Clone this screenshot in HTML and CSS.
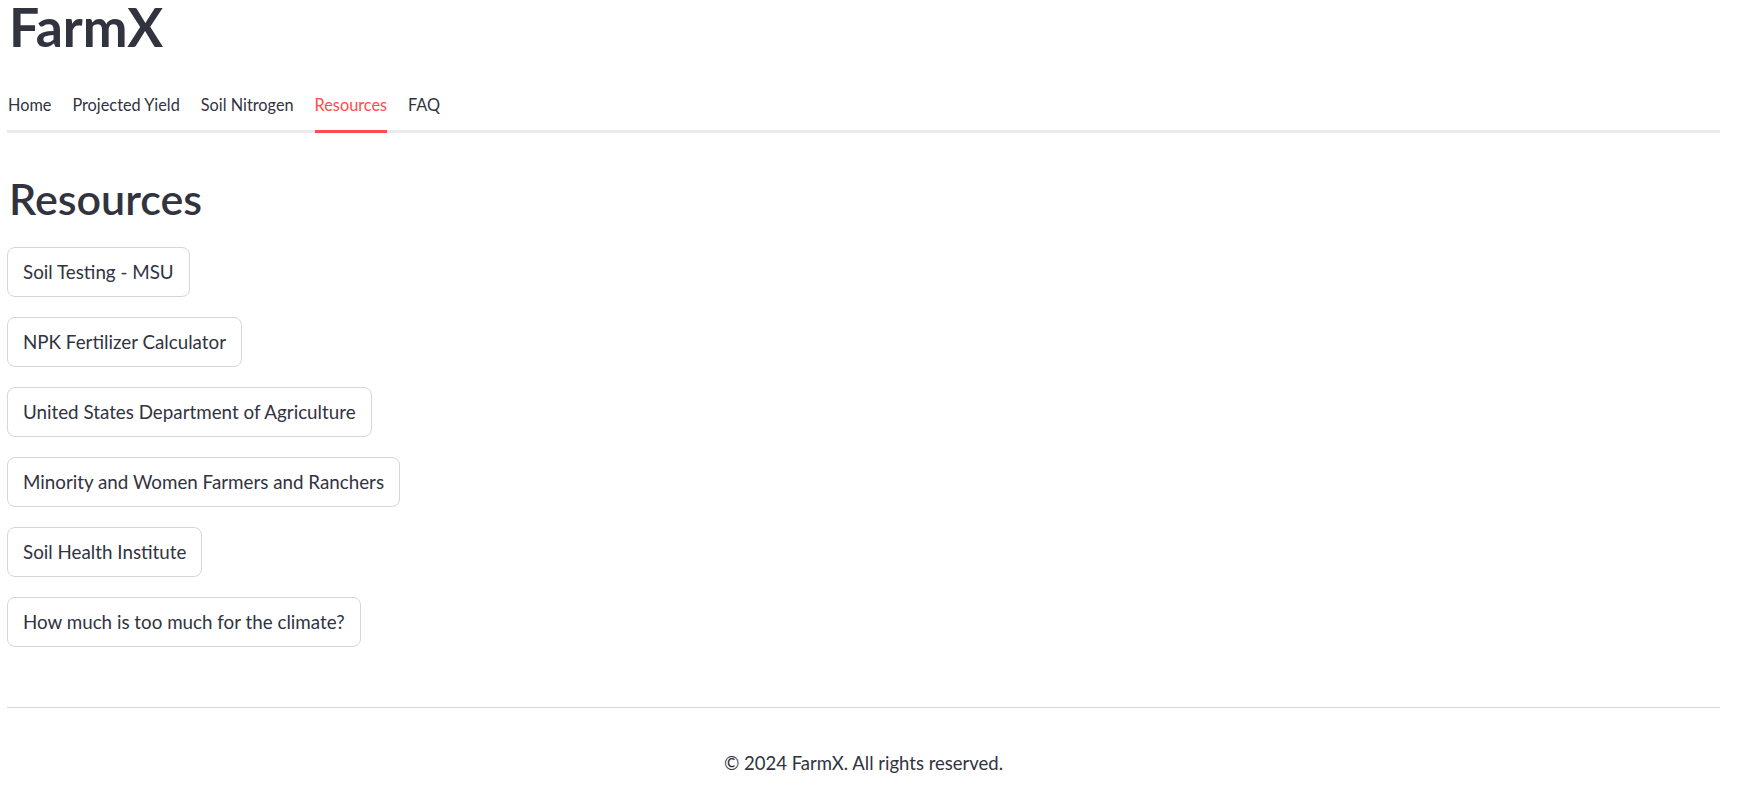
FILE: index.html
```html
<!DOCTYPE html>
<html lang="en">
<head>
    <meta charset="UTF-8">
    <meta name="viewport" content="width=device-width, initial-scale=1.0">
    <title>FarmX - Resources</title>
    <link rel="stylesheet" href="styles.css">
</head>
<body>

<div class="page">
    <h1 class="brand">FarmX</h1>

    <!-- Tabs -->
    <nav class="tabs">
        <a class="tab" href="#">Home</a>
        <a class="tab" href="#">Projected Yield</a>
        <a class="tab" href="#">Soil Nitrogen</a>
        <a class="tab active" href="#">Resources</a>
        <a class="tab" href="#">FAQ</a>
    </nav>

    <h2 class="section-title">Resources</h2>

    <div class="links">
        <button class="link-btn">Soil Testing - MSU</button>
        <button class="link-btn">NPK Fertilizer Calculator</button>
        <button class="link-btn">United States Department of Agriculture</button>
        <button class="link-btn">Minority and Women Farmers and Ranchers</button>
        <button class="link-btn">Soil Health Institute</button>
        <button class="link-btn">How much is too much for the climate?</button>
    </div>

    <footer class="footer">
        <p>&copy; 2024 FarmX. All rights reserved.</p>
    </footer>
</div>

</body>
</html>
```

FILE: styles.css
```css
* {
    margin: 0;
    padding: 0;
    box-sizing: border-box;
}

body {
    font-family: 'Lato', 'Noto Sans', sans-serif;
    color: #31333f;
    background: #fff;
}

.page {
    padding: 0 35px 0 7px;
}

.brand {
    font-size: 53.5px;
    font-weight: 700;
    line-height: 1;
    padding-left: 2px;
}

/* Tabs */
.tabs {
    display: flex;
    gap: 21px;
    border-bottom: 3px solid #ebebeb;
    margin-top: 31px;
}

.tab {
    display: block;
    font-size: 16.3px;
    line-height: 1.2;
    color: #31333f;
    text-decoration: none;
    padding: 10px 0 16px;
    margin-bottom: -3px;
    border-bottom: 3px solid transparent;
}

.tab:first-child {
    padding-left: 1px;
}

.tab.active {
    color: #ff4b4b;
    border-bottom-color: #ff4b4b;
}

.section-title {
    font-size: 43px;
    font-weight: 600;
    line-height: 1.2;
    margin-top: 40px;
    padding-left: 2px;
}

/* Link buttons */
.links {
    display: flex;
    flex-direction: column;
    align-items: flex-start;
    gap: 20px;
    margin-top: 22px;
}

.link-btn {
    font-family: inherit;
    font-size: 18.8px;
    color: #31333f;
    background: #fff;
    border: 1px solid #d5d6d9;
    border-radius: 8px;
    height: 50px;
    padding: 0 15px;
    cursor: pointer;
}

.link-btn:hover {
    border-color: #ff4b4b;
    color: #ff4b4b;
}

/* Footer */
.footer {
    margin-top: 60px;
    border-top: 1px solid #d6d6d6;
    text-align: center;
    font-size: 18.5px;
    line-height: 1.2;
    padding-top: 44px;
}
```
